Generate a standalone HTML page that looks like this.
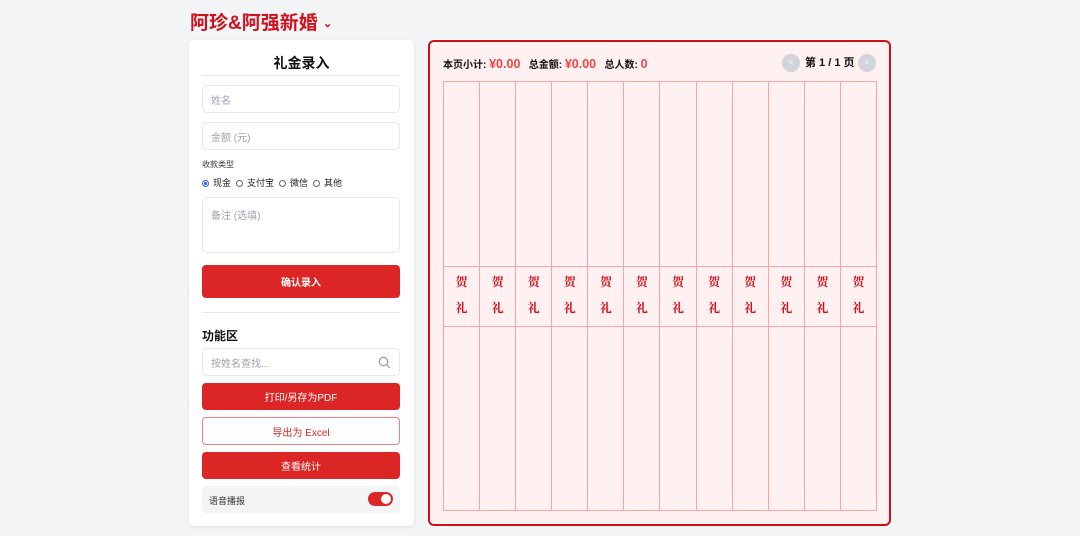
<!DOCTYPE html>
<html><head><meta charset="utf-8"><style>
*{box-sizing:border-box;margin:0;padding:0}
body{width:1080px;height:536px;background:#f3f4f6;font-family:"Liberation Sans","Noto Sans CJK SC",sans-serif;position:relative;overflow:hidden;color:#111}
.abs{position:absolute}
.title{left:190px;top:8px;font-size:19px;font-weight:bold;color:#d0101a}
.card{left:189px;top:40px;width:225px;height:486px;background:#fff;border-radius:5px;box-shadow:0 1px 4px rgba(0,0,0,.08)}
.inp{position:absolute;left:13px;width:198px;border:1px solid #e5e7eb;border-radius:5px;font-size:10px;color:#9ca3af;padding-left:8px;display:flex;align-items:center}
.btn{position:absolute;left:13px;width:198px;border-radius:4px;background:#dc2626;color:#fff;font-size:10px;display:flex;align-items:center;justify-content:center}
.radio{display:inline-block;width:7px;height:7px;border:1px solid #666;border-radius:50%;vertical-align:-1px;margin-right:4px}
.panel{left:428px;top:40px;width:463px;height:486px;border:2.5px solid #d0101a;border-radius:6px;background:#fff1f2}
.grid{position:absolute;left:13px;top:39px;width:434px;height:430px;border:1px solid #fca5a5;display:flex}
.col{flex:1;border-right:1px solid #fca5a5;position:relative}
.col:last-child{border-right:none}
.mid{position:absolute;left:0;right:0;top:184px;height:61px;border-top:1px solid #fca5a5;border-bottom:1px solid #fca5a5;color:#d0101a;font-family:"Noto Serif CJK SC",serif;font-weight:bold;font-size:12px;text-align:center;line-height:26px;padding-top:2px}
.num{color:#ef4444;font-size:12.5px;font-weight:bold}
</style></head><body>
<div class="abs title">阿珍&amp;阿强新婚 <span style="font-size:11px;vertical-align:2px">⌄</span></div>
<div class="abs card">
 <div class="abs" style="left:0;right:0;top:13px;text-align:center;font-size:14px;font-weight:bold">礼金录入</div>
 <div class="abs" style="left:13px;width:198px;top:35px;border-top:1px solid #e5e7eb"></div>
 <div class="inp" style="top:45px;height:28px">姓名</div>
 <div class="inp" style="top:82px;height:28px">金额 (元)</div>
 <div class="abs" style="left:13px;top:119px;font-size:8px;color:#333">收款类型</div>
 <div class="abs" style="left:13px;top:136px;font-size:9px;color:#222;white-space:nowrap"><span class="radio" style="border-color:#2563eb;background:radial-gradient(#2563eb 45%,#fff 50%)"></span>现金 &nbsp;<span class="radio"></span>支付宝 &nbsp;<span class="radio"></span>微信 &nbsp;<span class="radio"></span>其他</div>
 <div class="inp" style="top:157px;height:56px;align-items:flex-start;padding-top:9px">备注 (选填)</div>
 <div class="btn" style="top:225px;height:33px;font-weight:bold">确认录入</div>
 <div class="abs" style="left:13px;width:198px;top:272px;border-top:1px solid #e5e7eb"></div>
 <div class="abs" style="left:13px;top:287px;font-size:12px;font-weight:bold">功能区</div>
 <div class="inp" style="top:308px;height:28px">按姓名查找...<svg style="position:absolute;right:8px;top:7px" width="13" height="13" viewBox="0 0 13 13"><circle cx="5.5" cy="5.5" r="4.2" fill="none" stroke="#9ca3af" stroke-width="1.3"/><path d="M8.6 8.6L12 12" stroke="#9ca3af" stroke-width="1.3"/></svg></div>
 <div class="btn" style="top:343px;height:27px">打印/另存为PDF</div>
 <div class="btn" style="top:377px;height:28px;background:#fff;color:#dc2626;border:1px solid #f08080">导出为 Excel</div>
 <div class="btn" style="top:412px;height:27px">查看统计</div>
 <div class="abs" style="left:13px;top:446px;width:198px;height:27px;background:#f3f4f6;border-radius:4px;font-size:9px;color:#333;padding:8px 0 0 7px">语音播报
  <div class="abs" style="right:7px;top:6px;width:25px;height:14px;border-radius:7px;background:#dc2626"><div class="abs" style="right:2px;top:2px;width:10px;height:10px;border-radius:50%;background:#fff"></div></div></div>
</div>
<div class="abs panel">
 <div class="abs" style="left:13px;top:14px;font-size:10px;font-weight:bold;white-space:nowrap">本页小计: <span class="num">¥0.00</span> &nbsp; 总金额: <span class="num">¥0.00</span> &nbsp; 总人数: <span class="num">0</span></div>
 <div class="abs" style="left:352px;top:12px;width:18px;height:18px;border-radius:50%;background:#d1d5db;color:#fff;font-size:8px;text-align:center;line-height:18px">&lt;</div>
 <div class="abs" style="left:375px;top:14px;font-size:11px;font-weight:bold;line-height:14px">第 1 / 1 页</div>
 <div class="abs" style="left:428px;top:12px;width:18px;height:18px;border-radius:50%;background:#d1d5db;color:#fff;font-size:8px;text-align:center;line-height:18px">&gt;</div>
 <div class="grid">
  <div class="col"><div class="mid">贺<br>礼</div></div><div class="col"><div class="mid">贺<br>礼</div></div><div class="col"><div class="mid">贺<br>礼</div></div><div class="col"><div class="mid">贺<br>礼</div></div><div class="col"><div class="mid">贺<br>礼</div></div><div class="col"><div class="mid">贺<br>礼</div></div><div class="col"><div class="mid">贺<br>礼</div></div><div class="col"><div class="mid">贺<br>礼</div></div><div class="col"><div class="mid">贺<br>礼</div></div><div class="col"><div class="mid">贺<br>礼</div></div><div class="col"><div class="mid">贺<br>礼</div></div><div class="col"><div class="mid">贺<br>礼</div></div>
 </div>
</div>
</body></html>
